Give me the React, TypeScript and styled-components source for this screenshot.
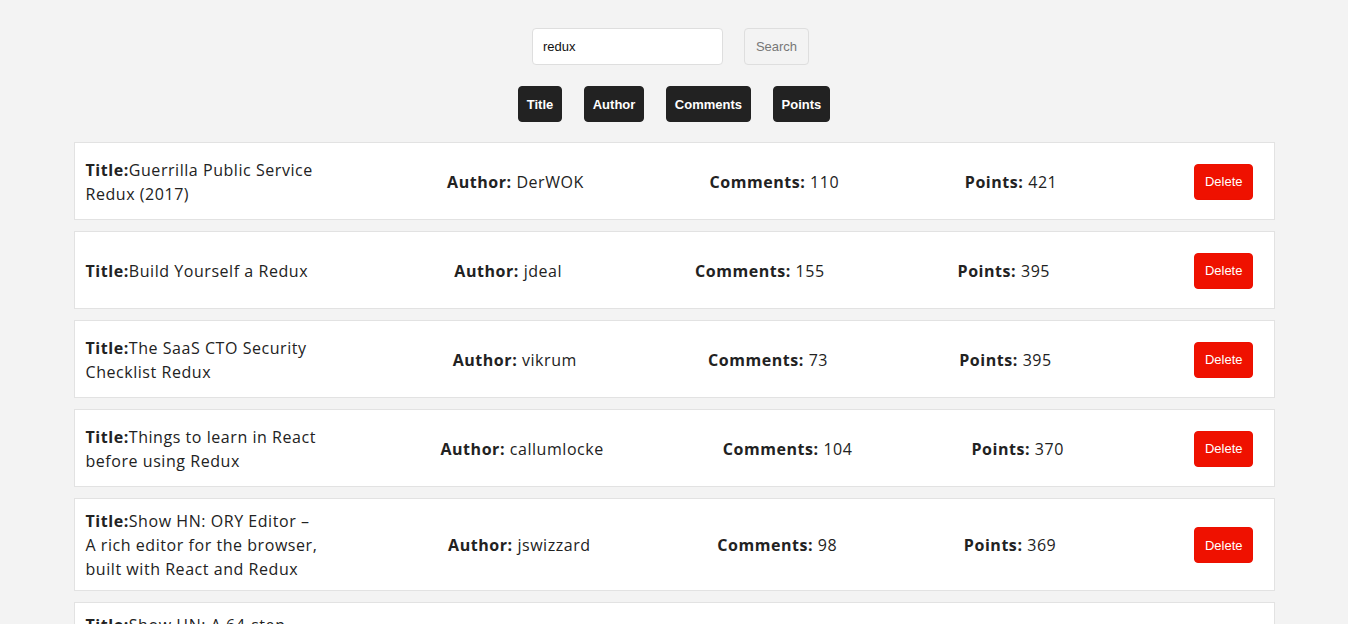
import React, { useState } from "react";
import styled, { createGlobalStyle } from "styled-components";

const GlobalStyle = createGlobalStyle`
  html, body {
    margin: 0;
    padding: 0;
    background: #f3f3f3;
  }
  * { box-sizing: border-box; }
`;

const Page = styled.div`
  padding-top: 28px;
  display: flex;
  flex-direction: column;
  align-items: center;
  font-family: "Open Sans", "Liberation Sans", sans-serif;
  color: #222;
`;

const SearchBar = styled.form`
  display: flex;
  gap: 21px;
  margin-left: -7px;
`;

const SearchInput = styled.input`
  width: 191px;
  height: 37px;
  padding: 0 10px;
  border: 1px solid #dedede;
  border-radius: 4px;
  background: #fff;
  font-family: "Liberation Sans", Arial, sans-serif;
  font-size: 13px;
  color: #111;
  outline: none;
`;

const SearchButton = styled.button`
  height: 37px;
  padding: 0 11px;
  border: 1px solid #dedede;
  border-radius: 4px;
  background: #f3f3f3;
  font-family: "Liberation Sans", Arial, sans-serif;
  font-size: 13px;
  color: #777;
  cursor: pointer;
`;

const SortBar = styled.div`
  display: flex;
  gap: 22px;
  margin-top: 21px;
`;

const SortButton = styled.button`
  height: 36px;
  padding: 0 7.75px;
  border: 1px solid #222;
  border-radius: 4px;
  background: #222;
  color: #fff;
  font-family: "Liberation Sans", Arial, sans-serif;
  font-size: 13px;
  font-weight: 700;
  cursor: pointer;
`;

const List = styled.div`
  width: 1201px;
  margin-top: 20px;
  display: flex;
  flex-direction: column;
  gap: 11px;
`;

const Card = styled.div`
  min-height: 78px;
  display: flex;
  align-items: center;
  justify-content: space-between;
  padding: 10px 20px 9px 11px;
  background: #fff;
  border: 1px solid #e2e2e2;
  font-size: 16px;
  line-height: 24px;
  letter-spacing: 0.55px;
  color: #222;
`;

const TitleCell = styled.div`
  width: 236px;
  flex: none;
`;

const Cell = styled.div`
  white-space: nowrap;
`;

const Label = styled.b`
  font-weight: 700;
`;

const DeleteButton = styled.button`
  margin-left: 11px;
  height: 36px;
  padding: 0 10px;
  border: 1px solid #ec1000;
  border-radius: 4px;
  background: #ef1100;
  color: #fff;
  font-family: "Liberation Sans", Arial, sans-serif;
  font-size: 13px;
  letter-spacing: 0;
  cursor: pointer;
`;

type Story = {
  id: number;
  title: string;
  author: string;
  comments: number;
  points: number;
};

const initialStories: Story[] = [
  { id: 1, title: "Guerrilla Public Service Redux (2017)", author: "DerWOK", comments: 110, points: 421 },
  { id: 2, title: "Build Yourself a Redux", author: "jdeal", comments: 155, points: 395 },
  { id: 3, title: "The SaaS CTO Security Checklist Redux", author: "vikrum", comments: 73, points: 395 },
  { id: 4, title: "Things to learn in React before using Redux", author: "callumlocke", comments: 104, points: 370 },
  { id: 5, title: "Show HN: ORY Editor – A rich editor for the browser, built with React and Redux", author: "jswizzard", comments: 98, points: 369 },
  { id: 6, title: "Show HN: A 64-step sequencer built with React, Redux and the Web Audio API", author: "zebproj", comments: 52, points: 301 },
];

export default function App() {
  const [query, setQuery] = useState("redux");
  const [stories, setStories] = useState<Story[]>(initialStories);

  return (
    <Page>
      <GlobalStyle />
      <SearchBar onSubmit={(e) => e.preventDefault()}>
        <SearchInput value={query} onChange={(e) => setQuery(e.target.value)} />
        <SearchButton type="submit">Search</SearchButton>
      </SearchBar>
      <SortBar>
        <SortButton>Title</SortButton>
        <SortButton>Author</SortButton>
        <SortButton>Comments</SortButton>
        <SortButton>Points</SortButton>
      </SortBar>
      <List>
        {stories.map((s) => (
          <Card key={s.id}>
            <TitleCell>
              <Label>Title:</Label>
              {s.title}
            </TitleCell>
            <Cell>
              <Label>Author:</Label> {s.author}
            </Cell>
            <Cell>
              <Label>Comments:</Label> {s.comments}
            </Cell>
            <Cell>
              <Label>Points:</Label> {s.points}
            </Cell>
            <DeleteButton onClick={() => setStories(stories.filter((x) => x.id !== s.id))}>
              Delete
            </DeleteButton>
          </Card>
        ))}
      </List>
    </Page>
  );
}
